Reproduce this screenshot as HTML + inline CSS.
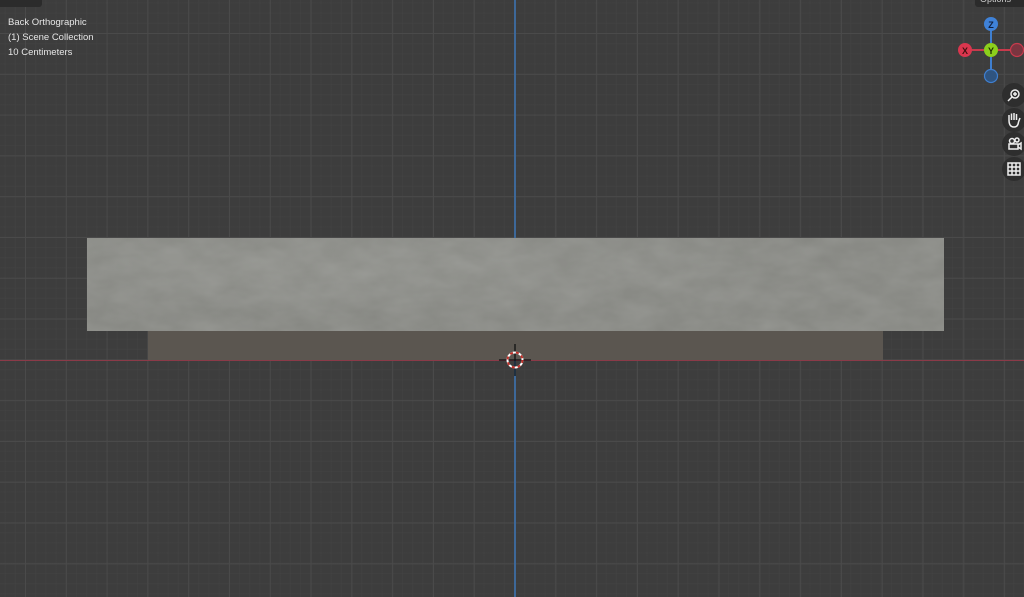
<!DOCTYPE html>
<html><head><meta charset="utf-8"><style>
html,body{margin:0;padding:0;width:1024px;height:597px;overflow:hidden;background:#3d3d3d;font-family:"Liberation Sans",sans-serif}
#vp{position:absolute;left:0;top:0;width:1024px;height:597px;
background-color:#3d3d3d;
background-image:
linear-gradient(to right, #4a4a4a 1px, transparent 1px),
linear-gradient(to bottom, #4a4a4a 1px, transparent 1px),
linear-gradient(to right, rgba(68,68,68,0.5) 1px, transparent 1px),
linear-gradient(to bottom, rgba(68,68,68,0.5) 1px, transparent 1px);
background-size:40.8px 40.8px,40.8px 40.8px,10.2px 10.2px,10.2px 10.2px;
background-position:25px 0,0 33px,25px 0,0 33px;}
.txt{position:absolute;left:8px;color:#e6e6e6;font-size:9.5px}
</style></head><body>
<div id="vp"></div>
<div style="position:absolute;left:0;top:360px;width:1024px;height:1px;background:#8b3a48"></div>
<div style="position:absolute;left:514px;top:0;width:2px;height:597px;background:#3d6899"></div>
<div style="position:absolute;left:87px;top:238px;width:857px;height:93px;background:radial-gradient(ellipse at 30% 30%,#8f908b,#878883 60%),#888984;"></div>
<svg style="position:absolute;left:87px;top:238px;opacity:.1" width="857" height="93"><filter id="n"><feTurbulence type="fractalNoise" baseFrequency="0.03 0.06" numOctaves="3" seed="3"/><feColorMatrix values="0 0 0 0 1 0 0 0 0 1 0 0 0 0 1 0 0 0 -1.3 1.1"/></filter><rect width="857" height="93" filter="url(#n)"/></svg>
<div style="position:absolute;left:148px;top:331px;width:735px;height:29px;background:#5b5650"></div>
<svg style="position:absolute;left:498px;top:343px" width="34" height="34">
<line x1="17" y1="1" x2="17" y2="33" stroke="#111" stroke-width="1.3"/>
<line x1="1" y1="17" x2="33" y2="17" stroke="#111" stroke-width="1.3"/>
<circle cx="17" cy="17" r="7.5" fill="none" stroke="#fff" stroke-width="2"/>
<circle cx="17" cy="17" r="7.5" fill="none" stroke="#c0302a" stroke-width="2" stroke-dasharray="3 3"/>
</svg>
<div class="txt" style="top:17px">Back Orthographic</div>
<div class="txt" style="top:32px">(1) Scene Collection</div>
<div class="txt" style="top:47px">10 Centimeters</div>
<div style="position:absolute;left:0;top:0;width:42px;height:7px;background:#2b2b2b;border-radius:0 0 3px 0"></div>
<div style="position:absolute;left:975px;top:-6px;width:49px;height:13px;background:#2b2b2b;border-radius:3px;color:#ccc;font-size:9px;padding-left:5px;line-height:10px">Options</div>
<svg style="position:absolute;left:950px;top:10px" width="74" height="80">
<line x1="41" y1="14" x2="41" y2="66" stroke="#3f7fd0" stroke-width="2"/>
<line x1="15" y1="40" x2="67" y2="40" stroke="#c83a4c" stroke-width="2"/>
<circle cx="41" cy="14" r="7" fill="#3f82d8"/><text x="41" y="18" font-size="9" text-anchor="middle" fill="#102040" font-family="Liberation Sans" font-weight="bold">Z</text>
<circle cx="15" cy="40" r="7" fill="#d9364e"/><text x="15" y="44" font-size="9" text-anchor="middle" fill="#401010" font-family="Liberation Sans" font-weight="bold">X</text>
<circle cx="67" cy="40" r="6.5" fill="#7a3540" stroke="#c83a4c" stroke-width="1.2"/>
<circle cx="41" cy="66" r="6.5" fill="#2f5480" stroke="#3f7fd0" stroke-width="1.2"/>
<circle cx="41" cy="40" r="7" fill="#8ccf1c"/><text x="41" y="44" font-size="9" text-anchor="middle" fill="#203000" font-family="Liberation Sans" font-weight="bold">Y</text>
</svg>
<svg style="position:absolute;left:1000px;top:82px" width="24" height="100">
<g fill="#2e2e2e"><circle cx="14" cy="13" r="12"/><circle cx="14" cy="38" r="12"/><circle cx="14" cy="62" r="12"/><circle cx="14" cy="87" r="12"/></g>
<g stroke="#eee" fill="none" stroke-width="1.5">
<circle cx="15" cy="12" r="4"/><line x1="12" y1="15" x2="8" y2="19"/><line x1="13" y1="12" x2="17" y2="12"/><line x1="15" y1="10" x2="15" y2="14"/>
<path d="M9 38 L9 33 M11.5 38 L11.5 31.5 M14 38 L14 31 M16.5 38 L16.5 32 M18.5 40 L20 36 M9 38 Q9 45 14 45 Q18 45 18.5 40"/>
<circle cx="12" cy="59" r="2.5"/><rect x="9" y="62" width="9" height="5"/><path d="M18 63 L21 61 L21 67 L18 65"/><circle cx="17" cy="58" r="2"/>
<rect x="8" y="81" width="12" height="12"/><path d="M12 81 V93 M16 81 V93 M8 85 H20 M8 89 H20"/>
</g></svg>
</body></html>
